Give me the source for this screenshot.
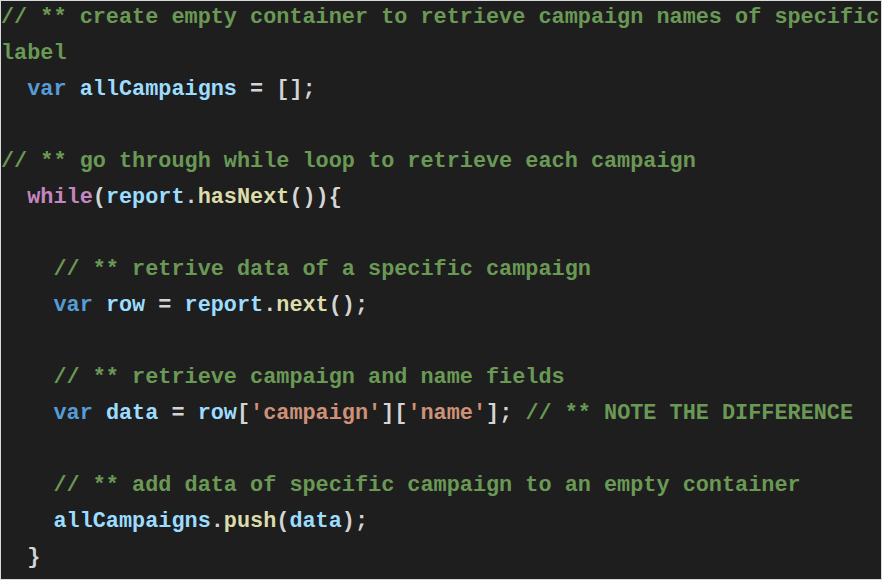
import React from "react";

const C = {
  cm: "text-[#6a9955]",
  kw: "text-[#569cd6]",
  id: "text-[#9cdcfe]",
  ctl: "text-[#c586c0]",
  fn: "text-[#dcdcaa]",
  str: "text-[#ce9178]",
  p: "text-[#d4d4d4]",
};

const lines = [
  [["cm", "// ** create empty container to retrieve campaign names of specific"]],
  [["cm", "label"]],
  [["p", "  "], ["kw", "var"], ["p", " "], ["id", "allCampaigns"], ["p", " = [];"]],
  [],
  [["cm", "// ** go through while loop to retrieve each campaign"]],
  [["p", "  "], ["ctl", "while"], ["p", "("], ["id", "report"], ["p", "."], ["fn", "hasNext"], ["p", "()){"]],
  [],
  [["p", "    "], ["cm", "// ** retrive data of a specific campaign"]],
  [["p", "    "], ["kw", "var"], ["p", " "], ["id", "row"], ["p", " = "], ["id", "report"], ["p", "."], ["fn", "next"], ["p", "();"]],
  [],
  [["p", "    "], ["cm", "// ** retrieve campaign and name fields"]],
  [["p", "    "], ["kw", "var"], ["p", " "], ["id", "data"], ["p", " = "], ["id", "row"], ["p", "["], ["str", "'campaign'"], ["p", "]["], ["str", "'name'"], ["p", "]; "], ["cm", "// ** NOTE THE DIFFERENCE"]],
  [],
  [["p", "    "], ["cm", "// ** add data of specific campaign to an empty container"]],
  [["p", "    "], ["id", "allCampaigns"], ["p", "."], ["fn", "push"], ["p", "("], ["id", "data"], ["p", ");"]],
  [["p", "  }"]],
];

export default function App() {
  return (
    <div className="w-[882px] h-[580px] overflow-hidden bg-[#1e1e1e] border border-[#d9d9d9]">
      <pre
        className="-mt-[1px] font-bold text-[21.85px] leading-[36px] whitespace-pre"
        style={{ fontFamily: '"Courier New", "Nimbus Mono PS", "FreeMono", "Liberation Mono", monospace' }}
      >
        {lines.map((segs, i) => (
          <div key={i} className="h-[36px]">
            {segs.map(([k, t], j) => (
              <span key={j} className={C[k]}>
                {t}
              </span>
            ))}
          </div>
        ))}
      </pre>
    </div>
  );
}
